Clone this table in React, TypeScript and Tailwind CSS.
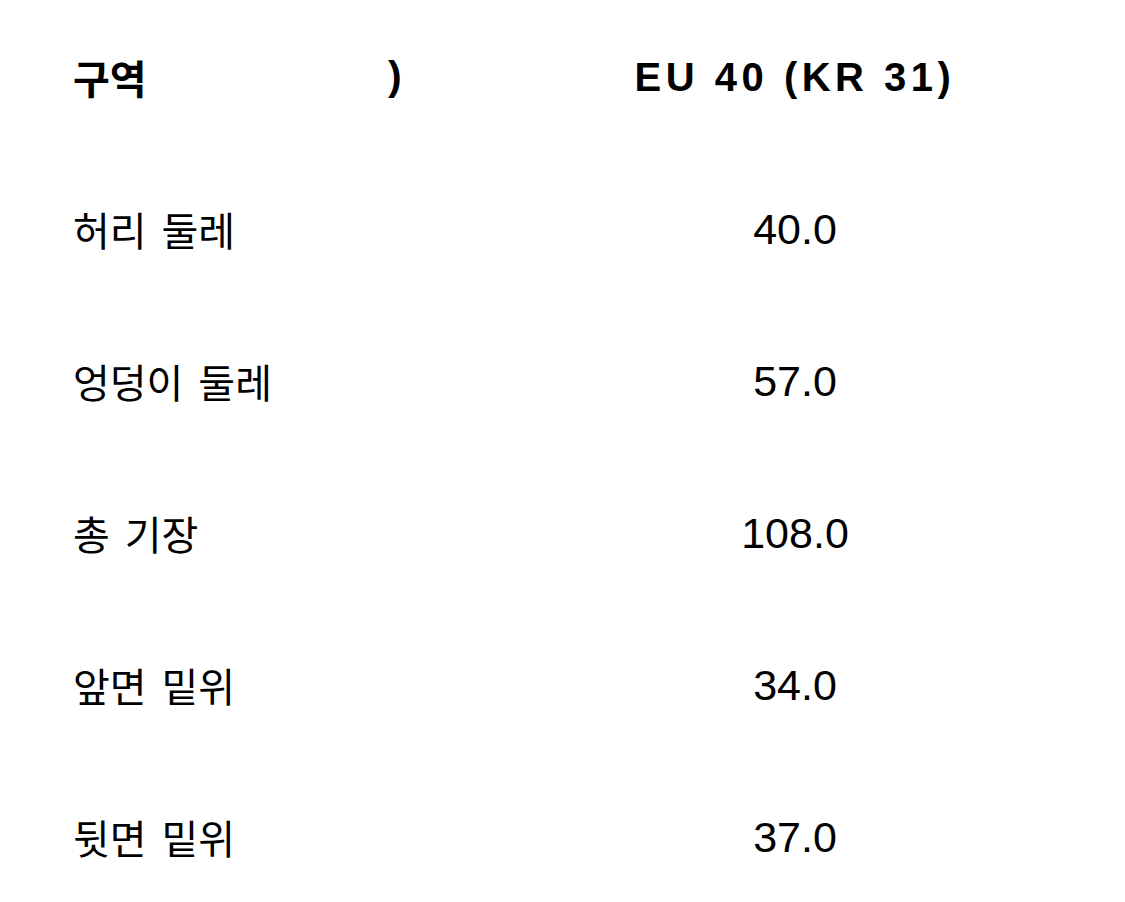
import React from "react";

const rows = [
  { label: "허리 둘레", value: "40.0" },
  { label: "엉덩이 둘레", value: "57.0" },
  { label: "총 기장", value: "108.0" },
  { label: "앞면 밑위", value: "34.0" },
  { label: "뒷면 밑위", value: "37.0" },
];

const font = "font-['Liberation_Sans','Noto_Sans_CJK_KR',sans-serif]";

export default function App() {
  return (
    <div className={`w-[1125px] h-[902px] bg-white text-black ${font}`}>
      <div className="pt-[1px] pl-[73px]">
        {/* Header */}
        <div className="flex items-center h-[152px]">
          <div className="w-[315px] text-[40px] font-bold font-['Noto_Sans_CJK_KR',sans-serif]">
            구역
          </div>
          <div className="w-[207px] text-[41px] font-bold">)</div>
          <div className="w-[400px] text-center text-[40px] font-bold tracking-[4.5px]">
            EU 40 (KR 31)
          </div>
        </div>

        {/* Rows */}
        {rows.map((r) => (
          <div key={r.label} className="flex items-center h-[152px]">
            <div className="w-[522px] text-[40px] [word-spacing:6px] font-['Noto_Sans_CJK_KR',sans-serif]">
              {r.label}
            </div>
            <div className="w-[400px] text-center text-[43px]">{r.value}</div>
          </div>
        ))}
      </div>
    </div>
  );
}
